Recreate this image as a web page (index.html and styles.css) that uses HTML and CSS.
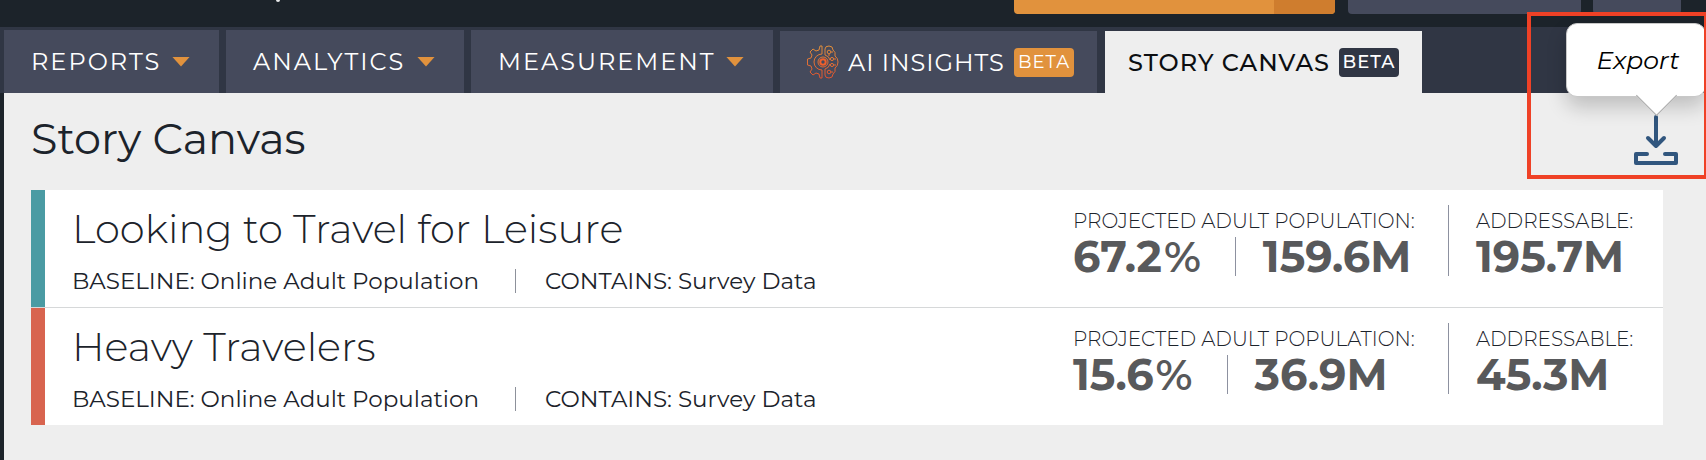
FILE: index.html
```html
<!DOCTYPE html>
<html lang="en">
<head>
  <meta charset="UTF-8" />
  <meta name="viewport" content="width=device-width, initial-scale=1.0" />
  <title>Story Canvas</title>
  <link rel="stylesheet" href="styles.css">
</head>
<body>

  <header class="topbar">
    <span class="topbar-mark"></span>
    <button class="split-button" type="button" aria-label="Create"><span class="split-toggle"></span></button>
    <button class="top-button" type="button" aria-label="Switch account"></button>
    <button class="top-button top-button-small" type="button" aria-label="Menu"></button>
  </header>

  <nav class="tabs">
    <a href="#reports" class="tab tab-reports">REPORTS <span class="caret"></span></a>
    <a href="#analytics" class="tab tab-analytics">ANALYTICS <span class="caret"></span></a>
    <a href="#measurement" class="tab tab-measurement">MEASUREMENT <span class="caret"></span></a>
    <a href="#insights" class="tab tab-beta">
      <svg class="brain" viewBox="0 0 32 34" aria-hidden="true">
        <defs>
          <linearGradient id="warm" gradientUnits="userSpaceOnUse" x1="0" y1="0" x2="0" y2="34">
            <stop offset="0" stop-color="#e0913c" />
            <stop offset="1" stop-color="#e0512f" />
          </linearGradient>
        </defs>
        <g fill="none" stroke="url(#warm)" stroke-width="1" stroke-linejoin="round">
          <path d="M15 9V1h-2l-1 4-3 1-3-2-3 3 2 3-1 3-3.500 1v6l3.500 1 1 3-2 3 3 3 3-2 3 1 1 4h2v-8" />
          <path d="M15 9a8 8 0 0 0 0 16" />
          <path d="M18 10V4q0-3 4-3 4 0 4 4 3 2 2 6 3 2 3 6t-3 6q1 4-2 6 0 4-4 4t-4-3v-6" />
          <path d="M18 10q4 1 5 5M18 24q4-1 5-5M22 9v2M24 7h2M27 14h2M27 20h2M24 27h2" />
          <circle cx="22" cy="7" r="1.800" />
          <circle cx="25" cy="14" r="1.600" />
          <circle cx="25" cy="20" r="1.600" />
          <circle cx="22" cy="27" r="1.800" />
          <circle cx="16" cy="17" r="5" />
          <circle cx="16" cy="17" r="2.700" stroke="#f0602c" stroke-width="2" />
        </g>
      </svg>
      AI INSIGHTS <span class="badge">BETA</span>
    </a>
    <a href="#canvas" class="tab tab-beta tab-active">STORY CANVAS <span class="badge">BETA</span></a>
  </nav>

  <main class="page">
    <div class="page-head">
      <h1>Story Canvas</h1>
      <button class="export" type="button" aria-label="Export" aria-describedby="export-tip">
        <svg viewBox="0 0 46 50" width="46" height="50" aria-hidden="true">
          <g fill="none" stroke="#31567e" stroke-width="4" stroke-linecap="round" stroke-linejoin="round">
            <path d="M23 2v29M15 23l8 8 8-8" />
            <path d="M14 39H3v9h40v-9H32" />
          </g>
        </svg>
      </button>
    </div>

    <section class="audiences">
      <article class="audience teal">
        <div class="audience-info">
          <h2>Looking to Travel for Leisure</h2>
          <p class="meta"><span>BASELINE: Online Adult Population</span><span>CONTAINS: Survey Data</span></p>
        </div>
        <div class="stat projected">
          <div class="stat-label">PROJECTED ADULT POPULATION:</div>
          <div class="stat-values"><span>67.2<small>%</small></span><span>159.6M</span></div>
        </div>
        <div class="stat addressable">
          <div class="stat-label">ADDRESSABLE:</div>
          <div class="stat-values"><span>195.7M</span></div>
        </div>
      </article>

      <article class="audience coral">
        <div class="audience-info">
          <h2>Heavy Travelers</h2>
          <p class="meta"><span>BASELINE: Online Adult Population</span><span>CONTAINS: Survey Data</span></p>
        </div>
        <div class="stat projected">
          <div class="stat-label">PROJECTED ADULT POPULATION:</div>
          <div class="stat-values"><span>15.6<small>%</small></span><span>36.9M</span></div>
        </div>
        <div class="stat addressable">
          <div class="stat-label">ADDRESSABLE:</div>
          <div class="stat-values"><span>45.3M</span></div>
        </div>
      </article>
    </section>
  </main>

  <div class="tooltip" id="export-tip" role="tooltip">Export</div>
  <div class="highlight"></div>

</body>
</html>
```
FILE: styles.css
```css
* {
  box-sizing: border-box;
}
body {
  font-family: Montserrat, Inter, sans-serif;
  background-color: #eeeeee;
  color: #1c232b;
  margin: 0;
  min-height: 100vh;
  display: flex;
  flex-direction: column;
  position: relative;
  overflow-x: hidden;
}
button {
  border: none;
  padding: 0;
  cursor: pointer;
}

/* top bar */
.topbar {
  height: 27px;
  background-color: #1c232a;
  display: flex;
  align-items: flex-start;
  justify-content: flex-end;
  gap: 12px;
  padding-right: 25px;
}
.topbar-mark {
  width: 4px;
  height: 2px;
  margin-left: 276px;
  margin-right: auto;
  background-color: #e8e9ea;
  border-radius: 0 0 2px 2px;
}
.split-button {
  width: 321px;
  height: 14px;
  margin-right: 1px;
  background-color: #e1923d;
  border-radius: 0 0 4px 4px;
  display: flex;
  justify-content: flex-end;
  overflow: hidden;
}
.split-toggle {
  width: 61px;
  height: 14px;
  background-color: #cf7d2e;
}
.top-button {
  width: 233px;
  height: 14px;
  background-color: #454a5c;
  border-radius: 0 0 4px 4px;
}
.top-button-small {
  width: 88px;
}

/* tabs */
.tabs {
  display: flex;
  align-items: flex-end;
  gap: 7px;
  height: 66px;
  padding-left: 4px;
  background-color: #303644;
}
.tab {
  display: flex;
  align-items: center;
  height: 63px;
  padding: 0 29px 0 27px;
  background-color: #454a5c;
  color: white;
  font-size: 24px;
  letter-spacing: 2px;
  text-decoration: none;
  white-space: nowrap;
}
.tab-reports {
  width: 215px;
}
.tab-analytics {
  width: 238px;
}
.tab-measurement {
  width: 302px;
}
.tab-beta {
  width: 317px;
  height: 62px;
  padding: 0 23px 0 27px;
  letter-spacing: 1px;
}
.tab-active {
  margin-left: 1px;
  padding: 0 23px;
  background-color: #eeeeee;
  color: #0c0e11;
  font-weight: 500;
}
.caret {
  flex: none;
  width: 18px;
  height: 10px;
  margin-left: auto;
  background-color: #e1923d;
  clip-path: polygon(0 0, 100% 0, 50% 100%);
}
.brain {
  flex: none;
  width: 32px;
  height: 34px;
  margin-right: 9px;
}
.badge {
  flex: none;
  width: 60px;
  margin-left: auto;
  background-color: #e1923d;
  border-radius: 4px;
  color: white;
  font-size: 18px;
  line-height: 29px;
  text-align: center;
}
.tab-active .badge {
  background-color: #303644;
}

/* page */
.page {
  flex: 1;
  border-left: 4px solid #1c232a;
  padding: 0 43px 35px 27px;
}
.page-head {
  display: flex;
  align-items: flex-start;
  justify-content: space-between;
  height: 97px;
  padding-top: 22px;
}
h1 {
  margin: 0;
  font-size: 43px;
  line-height: 48px;
  font-weight: 400;
}
.export {
  height: 50px;
  margin-right: -16px;
  background: none;
}
.export svg {
  display: block;
}

/* audiences */
.audiences {
  background-color: #d6d8d9;
}
.audience {
  display: flex;
  align-items: flex-start;
  background-color: white;
  border-left: 14px solid;
  height: 117px;
  padding: 15px 27px 0 27px;
}
.audience + .audience {
  margin-top: 1px;
}
.teal {
  border-color: #4a9ba3;
}
.coral {
  border-color: #d8644f;
}
.audience-info {
  flex: 1;
}
h2 {
  margin: 0;
  font-size: 40px;
  line-height: 48px;
  font-weight: 300;
}
.meta {
  display: flex;
  margin: 16px 0 0;
  font-size: 23px;
  line-height: 24px;
}
.meta span + span {
  margin-left: 36px;
  padding-left: 29px;
  border-left: 1px solid #8d919b;
}
.stat {
  height: 71px;
}
.projected {
  width: 376px;
  border-right: 1px solid #8d91a0;
}
.addressable {
  width: 187px;
  padding-left: 27px;
}
.stat-label {
  font-size: 20px;
  line-height: 32px;
  font-weight: 300;
  white-space: nowrap;
}
.stat-values {
  display: flex;
  color: #58595b;
  font-size: 43px;
  line-height: 39px;
  font-weight: 700;
}
.stat-values span + span {
  margin-left: 34px;
  padding-left: 27px;
  border-left: 1px solid #8d91a0;
}
.stat-values small {
  margin-left: 2px;
  font-size: 43px;
  font-weight: 600;
}

/* export tooltip */
.tooltip {
  position: absolute;
  top: 23px;
  right: 0;
  width: 140px;
  background-color: white;
  border: 1px solid #c8c8c8;
  border-radius: 11px;
  box-shadow: 0 10px 20px rgba(0,0,0,0.2);
  color: black;
  font-size: 25px;
  font-style: italic;
  line-height: 72px;
  text-align: center;
  padding-left: 4px;
}
.tooltip::after {
  content: "";
  position: absolute;
  left: 75px;
  bottom: -14px;
  width: 28px;
  height: 28px;
  background-color: white;
  border: solid #a8a8a8;
  border-width: 0 1px 1px 0;
  transform: rotate(45deg);
}
.highlight {
  position: absolute;
  top: 12px;
  right: -2px;
  width: 181px;
  height: 167px;
  border: 4px solid #ef4126;
  pointer-events: none;
}
```
